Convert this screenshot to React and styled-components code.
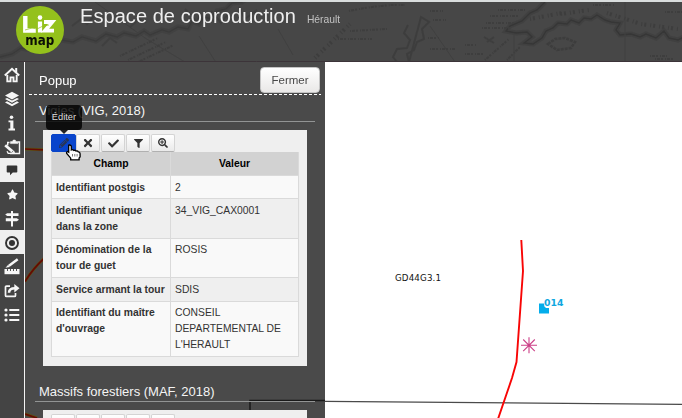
import React from "react";
import styled, { createGlobalStyle } from "styled-components";
import { FaStar, FaFilter, FaPencilAlt, FaTimes, FaCheck, FaSearchPlus } from "react-icons/fa";

const GlobalStyle = createGlobalStyle`
  *, *::before, *::after { box-sizing: border-box; }
  html, body { margin: 0; padding: 0; overflow: hidden; background: #fff; }
  body { font-family: "Liberation Sans", Arial, sans-serif; }
`;

const Page = styled.div`
  width: 682px;
  height: 418px;
  display: flex;
  flex-direction: column;
  overflow: hidden;
`;

const Header = styled.header`
  position: relative;
  flex: 0 0 62px;
  display: flex;
  align-items: flex-start;
  padding-left: 16px;
  border-top: 2px solid #d9dddd;
  background: #474747;
  overflow: hidden;
`;

const OldMap = styled.svg`
  position: absolute;
  inset: 0;
`;

const Logo = styled.svg`
  position: relative;
  flex: none;
  width: 48px;
  height: 48px;
  margin-top: 4px;
`;

const Title = styled.h1`
  position: relative;
  margin: 2px 0 0 16px;
  font-size: 20px;
  line-height: 24px;
  font-weight: 400;
  letter-spacing: 0.06px;
  color: #efefef;
  white-space: nowrap;
`;

const SubTitle = styled.span`
  margin-left: 11px;
  font-size: 10.3px;
  letter-spacing: 0;
  color: #c2c2c2;
`;

const Body = styled.div`
  flex: 1;
  display: flex;
  min-height: 0;
`;

const MenuBar = styled.nav`
  flex: 0 0 25px;
  background: #444;
  border-right: 1px solid #f4f4f4;
`;

const MenuItem = styled.div`
  width: 24px;
  height: 24px;
  display: flex;
  align-items: center;
  justify-content: center;
  color: ${(p) => (p.$active ? "#333" : "#f6f6f6")};
  background: ${(p) => (p.$active ? "#efefef" : "transparent")};
  svg { display: block; margin-top: 1px; }
`;

const Panel = styled.section`
  position: relative;
  flex: 0 0 300px;
  background: #4a4a4a;
  overflow: hidden;
`;

const Beneath = styled.svg`
  position: absolute;
  left: 0;
  top: 0;
`;

const PanelHead = styled.div`
  position: relative;
  display: flex;
  align-items: center;
  justify-content: space-between;
  height: 33px;
  margin: 0 4px;
  padding: 3px 1px 0 10px;
  font-size: 13px;
  color: #fff;
  background: repeating-linear-gradient(90deg, #fff 0 3px, transparent 3px 5px) 0 100% / 100% 1px no-repeat;
`;

const CloseButton = styled.button`
  width: 60px;
  height: 26px;
  padding: 0;
  border: 1px solid #c4c4c4;
  border-radius: 4px;
  background: linear-gradient(#fff, #e9e8e7);
  color: #484848;
  font: 11.5px "Liberation Sans", Arial, sans-serif;
`;

const Group = styled.div`
  position: relative;
  margin: ${(p) => p.$gap}px 8px 0 10px;
`;

const GroupTitle = styled.h4`
  height: 19px;
  margin: 0 2px 8px 0;
  padding-left: 4px;
  border-bottom: 1px solid #929494;
  color: #f4f4f4;
  font-size: 13px;
  line-height: ${(p) => p.$line}px;
  font-weight: 400;
`;

const Card = styled.div`
  width: 264px;
  height: 236px;
  margin-left: 8px;
  padding: 4px 8px 0;
  background: #efefef;
`;

const Tools = styled.div`
  display: flex;
  height: 18px;
`;

const Tool = styled.span`
  display: flex;
  align-items: center;
  justify-content: center;
  width: ${(p) => (p.$active ? 25 : 24)}px;
  height: 18px;
  margin-right: ${(p) => (p.$active ? 0 : 1)}px;
  color: ${(p) => (p.$active ? "#2a3550" : "#333")};
  border: 1px solid ${(p) => (p.$active ? "#0844c8" : "#d4d4d4")};
  border-bottom-color: ${(p) => (p.$active ? "#0844c8" : "#b0b0b0")};
  border-radius: 2px;
  background: ${(p) => (p.$active ? "#0844cc" : "linear-gradient(#fff, #eaeaea)")};
`;

const Table = styled.div`
  width: 248px;
  display: grid;
  grid-template-columns: 118px 127px;
  grid-template-rows: 23px 22px 39px 38px 23px 54px;
  gap: 1px;
  height: 205px;
  padding: 0 1px 1px 1px;
  background: #dadada;
  font-size: 10.35px;
  line-height: 16px;
  color: #333;
`;

const HeadCell = styled.div`
  background: #d2d2d2;
  color: #000;
  font-weight: 700;
  text-align: center;
  line-height: 23px;
`;

const Cell = styled.div`
  padding: ${(p) => p.$top}px 4px 0;
  white-space: pre;
  font-weight: ${(p) => (p.$label ? 700 : 400)};
  background: ${(p) => (p.$even ? "#efefef" : "#f9f9f9")};
`;

const Tooltip = styled.div`
  position: absolute;
  left: 21px;
  top: 43px;
  width: 36px;
  height: 25px;
  border-radius: 4px;
  background: rgba(0, 0, 0, 0.82);
  color: #ddd;
  font-size: 9.3px;
  line-height: 24px;
  text-align: center;
  &::after {
    content: "";
    position: absolute;
    left: 14px;
    top: 25px;
    border: 4px solid transparent;
    border-top-color: #222;
    border-bottom: 0;
  }
`;

const Cursor = styled.svg`
  position: absolute;
  left: 40px;
  top: 82px;
`;

const MapView = styled.main`
  flex: 1;
  background: #fff;
  svg { display: block; }
`;

const HomeIcon = () => (
  <svg width="16" height="16" viewBox="0 0 16 16" fill="none" stroke="currentColor">
    <path d="M0.8 8.4 8 1.8l7.2 6.6" strokeWidth="2" />
    <path d="M12.2 1v4" strokeWidth="2" />
    <path d="M3.3 8v6.4h3.2v-4h3v4h3.2V8" strokeWidth="1.9" />
  </svg>
);

const LayersIcon = () => (
  <svg width="16" height="16" viewBox="0 0 16 16" fill="currentColor">
    <path d="M8 .8 15 4.6 8 8.4 1 4.6z" />
    <path d="m1 8 2-1.1 5 2.7 5-2.7L15 8l-7 3.8z" />
    <path d="m1 11.4 2-1.1L8 13l5-2.7 2 1.1-7 3.8z" />
  </svg>
);

const InfoIcon = () => (
  <svg width="16" height="16" viewBox="0 0 16 16" fill="currentColor">
    <circle cx="7.5" cy="2.2" r="1.8" />
    <path d="M4.5 5.4h4.9v8.2H11v1.8H4.5v-1.8h1.8V7.2H4.5z" />
  </svg>
);

const ClipboardIcon = () => (
  <svg width="17" height="16" viewBox="0 0 17 16" fill="none" stroke="currentColor">
    <path d="M5.5 3.5H3.7v3M14 3h1.5v11.5H6" strokeWidth="1.4" />
    <path d="M6.5 4.6V2.6h2L9.2 1h2l.7 1.6h2v2z" fill="currentColor" strokeWidth=".5" />
    <path d="m1.2 6.2 7.2 6.2" strokeWidth="2.8" />
    <path d="m8 13.7 2.5.3-.8-2.4" fill="currentColor" strokeWidth=".8" />
    <path d="m3 12.2 1.2 2.2H9" strokeWidth="1.3" />
  </svg>
);

const CommentIcon = () => (
  <svg width="12" height="11" viewBox="0 0 12 11" fill="currentColor">
    <path d="M1.5.5h9q.8 0 .8.8v5.4q0 .8-.8.8H6.8L4 10.3V7.5H1.5q-.8 0-.8-.8V1.3q0-.8.8-.8z" />
  </svg>
);

const SignsIcon = () => (
  <svg width="16" height="16" viewBox="0 0 16 16" fill="currentColor">
    <path d="M7 0h2v15.5H7z" />
    <path d="M3.2 2.2h11.3v2.9H3.2L1.2 3.6zM1.8 7.3h11l2.2 1.5-2.2 1.5h-11z" />
  </svg>
);

const TargetIcon = () => (
  <svg width="16" height="16" viewBox="0 0 16 16">
    <circle cx="8" cy="8" r="6" fill="none" stroke="currentColor" strokeWidth="1.9" />
    <circle cx="8" cy="8" r="3" fill="currentColor" />
  </svg>
);

const MeasureIcon = () => (
  <svg width="16" height="17" viewBox="0 0 16 17">
    <path d="m5 7.8 8.7-6.6" stroke="currentColor" strokeWidth="2.5" fill="none" />
    <path d="m1.5 9.8 2.7-3 1.6 2.1z" fill="currentColor" />
    <path d="M.5 11h15v5.2H.5z" fill="currentColor" />
    <path d="M3.5 11v2M6.5 11v2M9.5 11v2M12.5 11v2" stroke="#555" />
  </svg>
);

const ShareIcon = () => (
  <svg width="16" height="16" viewBox="0 0 16 16" fill="none" stroke="currentColor">
    <path d="M6 3.2H2.5q-1 0-1 1v8.2q0 1 1 1h8q1 0 1-1V10" strokeWidth="1.7" />
    <path d="M5 9.8C5 6.2 7 5.2 11 5.2" strokeWidth="2.5" />
    <path d="M10.3 1v8.4l5.2-4.2z" fill="currentColor" stroke="none" />
  </svg>
);

const ListIcon = () => (
  <svg width="16" height="16" viewBox="0 0 16 16" fill="currentColor">
    <path d="M5.3 2h10v2h-10zM5.3 7h10v2h-10zM5.3 12h10v2h-10z" />
    <circle cx="2" cy="3" r="1.6" />
    <circle cx="2" cy="8" r="1.6" />
    <circle cx="2" cy="13" r="1.6" />
  </svg>
);

const menu = [
  { icon: <HomeIcon /> },
  { icon: <LayersIcon /> },
  { icon: <InfoIcon /> },
  { icon: <ClipboardIcon /> },
  { icon: <CommentIcon />, active: true },
  { icon: <FaStar size={11} /> },
  { icon: <SignsIcon /> },
  { icon: <TargetIcon />, active: true },
  { icon: <MeasureIcon /> },
  { icon: <ShareIcon /> },
  { icon: <ListIcon /> },
];

const rows = [
  { label: "Identifiant postgis", value: "2", top: 4 },
  { label: "Identifiant unique\ndans la zone", value: "34_VIG_CAX0001", top: 4 },
  { label: "Dénomination de la\ntour de guet", value: "ROSIS", top: 3 },
  { label: "Service armant la tour", value: "SDIS", top: 4 },
  { label: "Identifiant du maître\nd'ouvrage", value: "CONSEIL\nDEPARTEMENTAL DE\nL'HERAULT", top: 3 },
];

const Toolbar = ({ editing }) => (
  <Tools>
    <Tool $active={editing}><FaPencilAlt size={10} /></Tool>
    <Tool><FaTimes size={12} /></Tool>
    <Tool><FaCheck size={11} /></Tool>
    <Tool><FaFilter size={9} /></Tool>
    <Tool><FaSearchPlus size={10} /></Tool>
  </Tools>
);

const coast =
  "M0 55l12-3 9-6 11 2 8-6 12 3 9-7 12 2 9-5 14 4 10-7 11 3 7-4 12 3 8-5 6 4 12-5 7 2 9-5 10 2 4-8 7 3 5-7 8 2 5-8 9-2 6-6 10-1 9-6 14-6 12-3";
const cuba =
  "M545 0l-8 8-7 3-8 8-12 5-4 5 10 2 11-1 5 5-8 6 9 1 9-6 4-7 7-3 5-5 9 1 4-4 8 3 5-5 7 1 6-4 8 5 6 2 9 1-4 7 4 5 11-1 9 3 6-3 10 4 8-7 5 7 9 2 8-4 7 5 13-2";

const TopBar = () => (
  <Header>
    <OldMap width="682" height="60" viewBox="0 0 682 60" fill="none">
      <g opacity=".6">
        <path d={coast} stroke="#363636" strokeWidth="5" opacity=".5" />
        <path d={coast} stroke="#333" strokeWidth="1.3" />
        <path d={cuba} stroke="#373737" strokeWidth="5" opacity=".6" />
        <path d={cuba} stroke="#2c2c2c" strokeWidth="1.4" />
        <path d="M408 23l-4 8 6 7-3 8-10 1-4 8 4 5m12 0l-2-8 7-4 3-8 7-3-2-10 7-7-8-5z" stroke="#383838" strokeWidth="2" />
        <path d="M548 42l7-5 10-1 10 4-4 6-14 2z" stroke="#373737" strokeWidth="2.5" strokeDasharray="3 1" />
        <path d="M199 34l18 28M278 27l15 26M430 24l25 36M514 32v28M625 0v60M95 0l50 36 40 24" stroke="#3c3c3c" />
        <path d="M72 24l9-7 6 5 8-9M102 44l8-8 7 5M130 25l9-8 7 4M185 7l12 13 4-9M211 9l10 12 7-9M239 5l6 12 12-9" stroke="#3b3b3b" strokeWidth="2" />
        <path d="M487 40l7-5M484 35l10 6" stroke="#393939" strokeWidth="2" />
        <g stroke="#393939" strokeWidth="2" strokeDasharray="1 1 3 1 2 2">
          <path d="M120 54l38-18M128 58l38-18M138 60l36-17M349 9q34-7 56-6M350 29l37-2M338 37h34M430 9h13M433 18h13M428 36h11M430 47h25M465 43h11M465 52h18" />
          <path d="M498 8h27M490 14h28M486 21h28M482 26h30M593 3h21M655 57h20M665 10h17M650 54h17M485 58l24-21M507 58l13-13" />
        </g>
        <path d="M315 56l35-34M530 17l32-6M561 12l28-4M607 11l34 11 37 5" stroke="#383838" strokeWidth="4" strokeDasharray="1 2 2 4" />
      </g>
      <path d="M0 59.5h682" stroke="#3c3439" />
    </OldMap>
    <Logo viewBox="0 0 48 48">
      <circle cx="24" cy="24" r="24" fill="#94c11c" />
      <path d="M9.3 10v14.5h10.5" fill="none" stroke="#fff" strokeWidth="4.4" />
      <path d="M24 15.5v11" stroke="#fff" strokeWidth="4.2" />
      <circle cx="24" cy="11.6" r="2.3" fill="#fff" />
      <path d="M28 16h8.3L29 24.7h9" fill="none" stroke="#fff" strokeWidth="3.8" />
      <path d="M9 24l7-2 5 1 6-3 6-1" fill="none" stroke="#94c11c" strokeWidth=".7" />
      <text x="9.3" y="39" fontFamily="DejaVu Sans" fontWeight="700" fontSize="13.5" textLength="29" lengthAdjust="spacingAndGlyphs" fill="#0b0f05">map</text>
    </Logo>
    <Title>Espace de coproduction<SubTitle>Hérault</SubTitle></Title>
  </Header>
);

export default function App() {
  return (
    <Page>
      <GlobalStyle />
      <TopBar />
      <Body>
        <MenuBar>
          {menu.map((m, i) => (
            <MenuItem key={i} $active={m.active}>{m.icon}</MenuItem>
          ))}
        </MenuBar>
        <Panel>
          <Beneath width="300" height="356" fill="none">
            <path d="M0 87l19 .8M0 219.5q8-13 19-23M0 352l12 4" stroke="#5b5514" strokeWidth="3" />
            <path d="M0 87l19 .8M0 219.5q8-13 19-23M0 352l12 4" stroke="#650905" strokeWidth="1.7" />
            <path d="M225 356v-17.5h75" stroke="#191919" strokeWidth="1.5" />
          </Beneath>
          <PanelHead>
            <span>Popup</span>
            <CloseButton>Fermer</CloseButton>
          </PanelHead>
          <Group $gap={8}>
            <GroupTitle $line={16}>Vigies (VIG, 2018)</GroupTitle>
            <Card>
              <Toolbar editing />
              <Table>
                <HeadCell>Champ</HeadCell>
                <HeadCell>Valeur</HeadCell>
                {rows.map(({ label, value, top }, i) => (
                  <React.Fragment key={label}>
                    <Cell $label $top={top} $even={i % 2 === 1}>{label}</Cell>
                    <Cell $top={top} $even={i % 2 === 1}>{value}</Cell>
                  </React.Fragment>
                ))}
              </Table>
            </Card>
          </Group>
          <Group $gap={17}>
            <GroupTitle $line={18}>Massifs forestiers (MAF, 2018)</GroupTitle>
            <Card><Toolbar /></Card>
          </Group>
          <Tooltip>Éditer</Tooltip>
          <Cursor width="17" height="17" viewBox="0 0 16 17">
            <path
              d="M3.2 1.2q1.8-.8 2.6 1V6q1.5-.8 2.4.5 1.5-.7 2.4.6 1.6-.5 2.2.8 1.8.2 1.8 1.8v3.2l-1 1v1.9H5.2v-1.6L1.2 9.5q-.6-1.6.8-2l1.2.8z"
              fill="#fff" stroke="#000" strokeWidth="1.3"
            />
            <path d="M7 10v2.5M9.3 10v2.5M11.6 10v2.5" stroke="#555" strokeWidth=".8" />
          </Cursor>
        </Panel>
        <MapView>
          <svg width="357" height="356" viewBox="325 62 357 356" fill="none">
            <path d="M325 401.3L682 404.3" stroke="#4a4a4a" strokeWidth="1.2" />
            <path d="M521.3 240l1.7 31-6.5 91-4.5 16-14 41" stroke="#f80505" strokeWidth="1.9" />
            <path d="M521 345.3h16M529 337.3v16M523.2 339.5l11.6 11.6M534.8 339.5l-11.6 11.6" stroke="#cc4088" strokeWidth="1.1" />
            <path d="M539 303.5h5.2q-.5 3.5 2 4.5h2.8v5.5h-10z" fill="#04adeb" />
            <g fontFamily="DejaVu Sans">
              <text x="544" y="306" fontSize="9.3" fontWeight="700" textLength="19.5" fill="#10a7df">014</text>
              <text x="395" y="280.5" fontSize="8.7" textLength="46" fill="#111">GD44G3.1</text>
            </g>
          </svg>
        </MapView>
      </Body>
    </Page>
  );
}
